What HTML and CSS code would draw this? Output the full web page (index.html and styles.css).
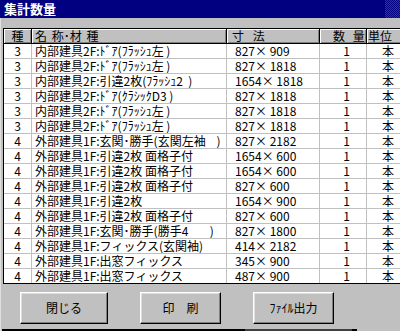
FILE: index.html
```html
<!DOCTYPE html>
<html lang="ja">
<head>
<meta charset="utf-8">
<title>集計数量</title>
<link rel="stylesheet" href="styles.css">
</head>
<body>
<div class="window">
  <div class="titlebar">
    <span class="title">集計数量</span>
    <span class="dither"></span>
  </div>
  <div class="main">
    <div class="grid">
      <div class="row head">
        <div class="hc c1">種</div>
        <div class="hc c2">名 称･材 種</div>
        <div class="hc c3">寸 法</div>
        <div class="hc c4">数 量</div>
        <div class="hc c5">単位</div>
      </div>
      <div class="row"><div class="dc c1">3</div><div class="dc c2">内部建具2F:ﾄﾞｱ(ﾌﾗｯｼｭ左 )</div><div class="dc c3">827× 909</div><div class="dc c4">1</div><div class="dc c5">本</div></div>
      <div class="row"><div class="dc c1">3</div><div class="dc c2">内部建具2F:ﾄﾞｱ(ﾌﾗｯｼｭ左 )</div><div class="dc c3">827× 1818</div><div class="dc c4">1</div><div class="dc c5">本</div></div>
      <div class="row"><div class="dc c1">3</div><div class="dc c2">内部建具2F:引違2枚(ﾌﾗｯｼｭ2&nbsp;&nbsp;)</div><div class="dc c3">1654× 1818</div><div class="dc c4">1</div><div class="dc c5">本</div></div>
      <div class="row"><div class="dc c1">3</div><div class="dc c2">内部建具2F:ﾄﾞｱ(ｸﾗｼｯｸD3 )</div><div class="dc c3">827× 1818</div><div class="dc c4">1</div><div class="dc c5">本</div></div>
      <div class="row"><div class="dc c1">3</div><div class="dc c2">内部建具2F:ﾄﾞｱ(ﾌﾗｯｼｭ左 )</div><div class="dc c3">827× 1818</div><div class="dc c4">1</div><div class="dc c5">本</div></div>
      <div class="row"><div class="dc c1">3</div><div class="dc c2">内部建具2F:ﾄﾞｱ(ﾌﾗｯｼｭ左 )</div><div class="dc c3">827× 1818</div><div class="dc c4">1</div><div class="dc c5">本</div></div>
      <div class="row"><div class="dc c1">4</div><div class="dc c2">外部建具1F:玄関･勝手(玄関左袖&nbsp;&nbsp;&nbsp;&nbsp;)</div><div class="dc c3">827× 2182</div><div class="dc c4">1</div><div class="dc c5">本</div></div>
      <div class="row"><div class="dc c1">4</div><div class="dc c2">外部建具1F:引違2枚 面格子付</div><div class="dc c3">1654× 600</div><div class="dc c4">1</div><div class="dc c5">本</div></div>
      <div class="row"><div class="dc c1">4</div><div class="dc c2">外部建具1F:引違2枚 面格子付</div><div class="dc c3">1654× 600</div><div class="dc c4">1</div><div class="dc c5">本</div></div>
      <div class="row"><div class="dc c1">4</div><div class="dc c2">外部建具1F:引違2枚 面格子付</div><div class="dc c3">827× 600</div><div class="dc c4">1</div><div class="dc c5">本</div></div>
      <div class="row"><div class="dc c1">4</div><div class="dc c2">外部建具1F:引違2枚</div><div class="dc c3">1654× 900</div><div class="dc c4">1</div><div class="dc c5">本</div></div>
      <div class="row"><div class="dc c1">4</div><div class="dc c2">外部建具1F:引違2枚 面格子付</div><div class="dc c3">827× 600</div><div class="dc c4">1</div><div class="dc c5">本</div></div>
      <div class="row"><div class="dc c1">4</div><div class="dc c2">外部建具1F:玄関･勝手(勝手4&nbsp;&nbsp;&nbsp;&nbsp;&nbsp;&nbsp;&nbsp;&nbsp;)</div><div class="dc c3">827× 1800</div><div class="dc c4">1</div><div class="dc c5">本</div></div>
      <div class="row"><div class="dc c1">4</div><div class="dc c2">外部建具1F:フィックス(玄関袖)</div><div class="dc c3">414× 2182</div><div class="dc c4">1</div><div class="dc c5">本</div></div>
      <div class="row"><div class="dc c1">4</div><div class="dc c2">外部建具1F:出窓フィックス</div><div class="dc c3">345× 900</div><div class="dc c4">1</div><div class="dc c5">本</div></div>
      <div class="row last"><div class="dc c1">4</div><div class="dc c2">外部建具1F:出窓フィックス</div><div class="dc c3">487× 900</div><div class="dc c4">1</div><div class="dc c5">本</div></div>
    </div>
    <div class="buttons">
      <button class="btn wide">閉じる</button>
      <button class="btn">印　刷</button>
      <button class="btn">ﾌｧｲﾙ出力</button>
    </div>
    <div class="bottomline">
      <span class="seg black1"></span>
      <span class="seg dark"></span>
      <span class="seg black2"></span>
    </div>
  </div>
</div>
</body>
</html>
```

FILE: styles.css
```css
* { box-sizing: border-box; }

html, body {
  margin: 0;
  padding: 0;
}

body {
  width: 400px;
  height: 331px;
  overflow: hidden;
  background: #c0c0c0;
  font-family: "Noto Sans CJK JP", "Noto Sans", sans-serif;
  font-size: 12px;
  color: #000;
}

.window {
  width: 400px;
  height: 331px;
  display: flex;
  flex-direction: column;
}

.titlebar {
  height: 18px;
  flex: none;
  display: flex;
  background: #000080;
  color: #fff;
}

.title {
  flex: 1;
  padding-left: 4px;
  font-size: 13px;
  font-weight: 700;
  line-height: 18px;
}

.dither {
  width: 15px;
  background: repeating-conic-gradient(#000080 0 25%, #2828e8 0 50%) 0 0 / 2px 2px;
}

.main {
  flex: 1;
  display: flex;
  flex-direction: column;
  border-left: 1px solid #dfdfdf;
  padding: 10px 0 0 2px;
  overflow: hidden;
}

.grid {
  width: 420px;
  border-top: 1px solid #000;
  border-left: 1px solid #000;
  border-bottom: 1px solid #000;
  background: #fff;
}

.row {
  display: grid;
  grid-template-columns: 28px 195px 93px 47px 57px;
  height: 15px;
}

.row.last {
  height: 14px;
}

.row.last .dc {
  border-bottom: none;
}

.hc {
  background: #c0c0c0;
  border-right: 1px solid #000;
  border-bottom: 1px solid #000;
  box-shadow: inset 1px 1px #fff, inset -1px -1px #808080;
  line-height: 14px;
  white-space: nowrap;
  overflow: hidden;
}

.dc {
  border-right: 1px solid #c0c0c0;
  border-bottom: 1px solid #c0c0c0;
  line-height: 14px;
  white-space: nowrap;
  overflow: hidden;
}

.hc.c1, .dc.c1 { text-align: center; }
.hc.c2 { padding-left: 3px; word-spacing: 2px; }
.hc.c3 { padding-left: 5px; word-spacing: 6px; }
.hc.c4 { padding-left: 13px; word-spacing: 5px; }
.hc.c5 { padding-left: 1px; }

.dc.c2 { padding-left: 3px; }
.dc.c3 { padding-left: 8px; }
.dc.c4 { text-align: right; padding-right: 16px; }
.dc.c5 { padding-left: 15px; }

.buttons {
  display: flex;
  gap: 32px;
  padding: 8px 0 0 17px;
  height: 45px;
}

.btn {
  width: 81px;
  height: 32px;
  margin: 0;
  padding: 0;
  background: #c0c0c0;
  border: 1px solid;
  border-color: #fff #000 #000 #fff;
  box-shadow: inset -1px -1px #808080, inset 1px 1px #dfdfdf;
  font-family: "Noto Sans CJK JP", "Noto Sans", sans-serif;
  font-size: 12px;
  color: #000;
  line-height: 14px;
}

.btn.wide {
  width: 88px;
}

.bottomline {
  display: flex;
  height: 2px;
  margin-left: -1px;
}

.seg { display: block; height: 2px; }
.black1 { width: 243px; background: #000; }
.dark { width: 107px; background: #404040; }
.black2 { width: 5px; background: #000; }
```
